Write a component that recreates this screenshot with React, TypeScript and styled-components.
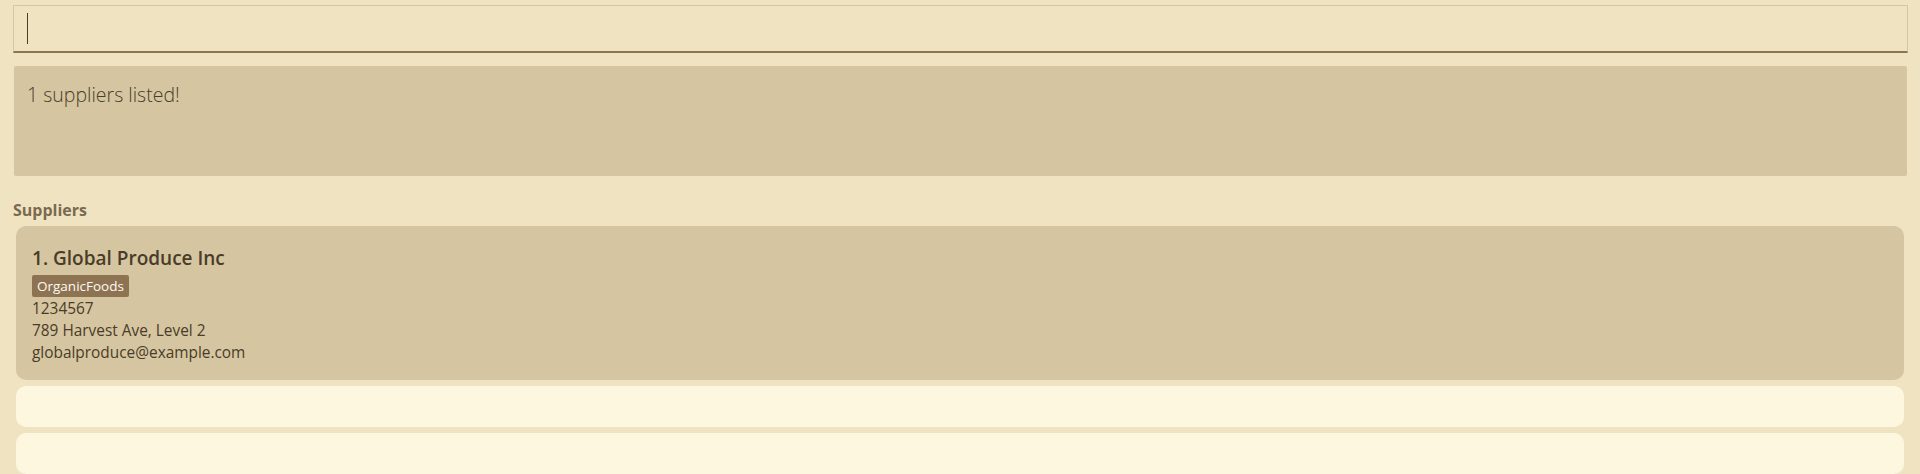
import { createGlobalStyle, styled } from "styled-components";

const GlobalStyle = createGlobalStyle`
    html, body {
        margin: 0;
        padding: 0;
        background: #f0e3c2;
        font-family: "Open Sans", "Noto Sans", sans-serif;
        overflow: hidden;
    }
`;

const Page = styled.div`
    display: flex;
    flex-direction: column;
    padding: 5px 12px 0 13px;
    height: 474px;
    box-sizing: border-box;
`;

const CommandBox = styled.div`
    height: 48px;
    box-sizing: border-box;
    border: 1px solid #d6c7a0;
    border-bottom: 2px solid #8e7450;
    background: #f0e3c2;
    display: flex;
    align-items: center;
    padding-left: 13px;
`;

const Caret = styled.div`
    width: 1px;
    height: 31px;
    background: #4a3c28;
`;

const ResultBox = styled.div`
    margin: 13px 1px 0 1px;
    height: 111px;
    background: #d5c6a1;
    border-radius: 2px;
    padding: 16px 13px;
    box-sizing: border-box;
    font-size: 19.5px;
    line-height: 26px;
    font-weight: 300;
    color: #4a3c28;
`;

const SectionLabel = styled.div`
    margin-top: 24px;
    font-size: 16px;
    font-weight: 700;
    color: #7a6a4f;
    line-height: 20px;
`;

const List = styled.div`
    display: flex;
    flex-direction: column;
    gap: 6px;
    margin: 6px 4px 0 3px;
`;

const Card = styled.div<{ $selected?: boolean; $h?: number }>`
    background: ${(p) => (p.$selected ? "#d5c6a1" : "#fdf7e0")};
    border-radius: 10px;
    height: ${(p) => p.$h ?? 41}px;
    box-sizing: border-box;
    padding: 19px 16px 0 16px;
    color: #4a3c28;
    flex-shrink: 0;
`;

const Title = styled.div`
    font-size: 19px;
    font-weight: 600;
    line-height: 26px;
    color: #4a3c28;
`;

const Tags = styled.div`
    display: flex;
    gap: 4px;
    margin-top: 4px;
    margin-bottom: 1px;
`;

const Tag = styled.span`
    background: #8e7353;
    color: #fffaf0;
    font-size: 13.5px;
    font-weight: 500;
    line-height: 22px;
    padding: 0 5px;
    border-radius: 2px;
`;

const Field = styled.div`
    font-size: 15.4px;
    line-height: 22px;
`;

const suppliers = [
    {
        name: "Global Produce Inc",
        tags: ["OrganicFoods"],
        phone: "1234567",
        address: "789 Harvest Ave, Level 2",
        email: "globalproduce@example.com",
    },
];

export default function App() {
    return (
        <>
            <GlobalStyle />
            <Page>
                <CommandBox>
                    <Caret />
                </CommandBox>
                <ResultBox>{suppliers.length} suppliers listed!</ResultBox>
                <SectionLabel>Suppliers</SectionLabel>
                <List>
                    {suppliers.map((s, i) => (
                        <Card $selected $h={154} key={i}>
                            <Title>{i + 1}. {s.name}</Title>
                            <Tags>
                                {s.tags.map((t) => <Tag key={t}>{t}</Tag>)}
                            </Tags>
                            <Field>{s.phone}</Field>
                            <Field>{s.address}</Field>
                            <Field>{s.email}</Field>
                        </Card>
                    ))}
                    <Card />
                    <Card />
                </List>
            </Page>
        </>
    );
}
